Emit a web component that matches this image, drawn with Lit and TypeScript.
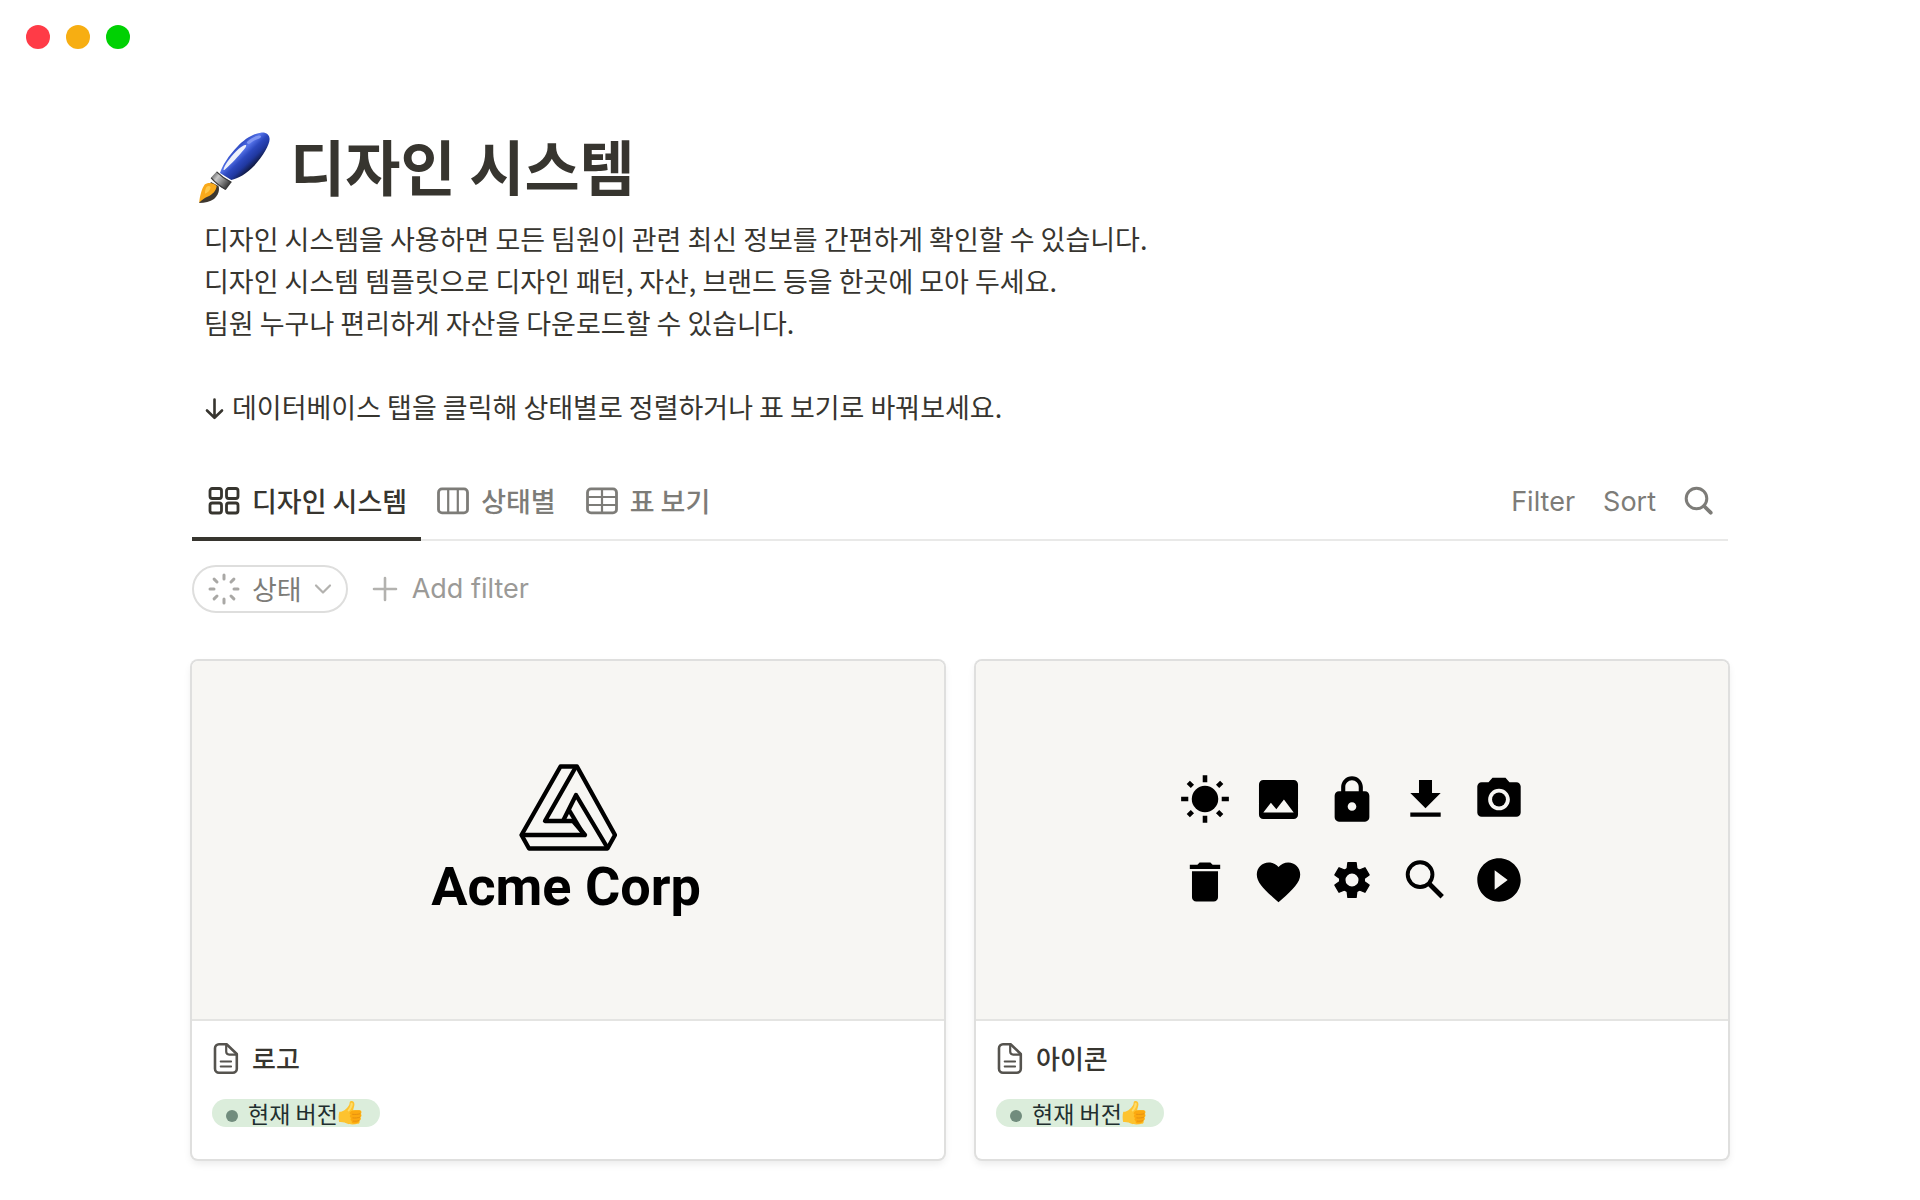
import { LitElement, html, svg, css, type TemplateResult, type SVGTemplateResult } from "lit";
import { customElement, property, state } from "lit/decorators.js";
import { classMap } from "lit/directives/class-map.js";

type ViewId = "gallery" | "board" | "table";

interface View {
  id: ViewId;
  label: string;
  icon: SVGTemplateResult;
}

const VIEWS: View[] = [
  {
    id: "gallery",
    label: "디자인 시스템",
    icon: svg`
      <rect x="2" y="4.500" width="11.500" height="10" rx="2.200"/>
      <rect x="18.500" y="4.500" width="11.500" height="10" rx="2.200"/>
      <rect x="2" y="19" width="11.500" height="10" rx="2.200"/>
      <rect x="18.500" y="19" width="11.500" height="10" rx="2.200"/>`,
  },
  {
    id: "board",
    label: "상태별",
    icon: svg`
      <rect x="1.500" y="4.900" width="29" height="24" rx="3.500"/>
      <path d="M11.200 5v24M20.800 5v24" stroke-width="2.200"/>`,
  },
  {
    id: "table",
    label: "표 보기",
    icon: svg`
      <rect x="1.500" y="4.900" width="29" height="24" rx="3.500"/>
      <path d="M2 13h28M2 21h28M16 5v24" stroke-width="2.200"/>`,
  },
];

/* Each glyph sits on a 24-unit grid; x and y give its centre on the cover. */
const COVER_ICONS: { x: number; y: number; glyph: SVGTemplateResult }[] = [
  {
    x: 229, y: 138,
    glyph: svg`
      <circle cx="12" cy="12" r="6.1"/>
      <path fill="none" stroke="currentColor" stroke-width="2.1"
        d="M12 1v3.3M12 19.700v3.300M1 12h3.300M19.700 12H23M4.300 4.300l1.900 1.900M17.800 17.800l1.900 1.900M4.300 19.700l1.900-1.900M17.800 6.200l1.900-1.900"/>`,
  },
  {
    x: 302.5, y: 138.5,
    glyph: svg`<path d="M21 19V5c0-1.100-.9-2-2-2H5c-1.100 0-2 .9-2 2v14c0 1.100.9 2 2 2h14c1.100 0 2-.9 2-2zM8.500 13.500l2.500 3.010L14.500 12l4.500 6H5l3.500-4.500z"/>`,
  },
  {
    x: 376, y: 139,
    glyph: svg`<path fill-rule="evenodd" d="M18 8h-1V6c0-2.760-2.240-5-5-5S7 3.240 7 6v2H6c-1.100 0-2 .9-2 2v10c0 1.100.9 2 2 2h12c1.100 0 2-.9 2-2V10c0-1.100-.9-2-2-2zm-6 9c-1.100 0-2-.9-2-2s.9-2 2-2 2 .9 2 2-.9 2-2 2zm3.100-9H8.900V6c0-1.710 1.390-3.100 3.100-3.100s3.100 1.390 3.100 3.100v2z"/>`,
  },
  { x: 449.5, y: 138.5, glyph: svg`<path d="M19 9h-4V3H9v6H5l7 7 7-7zM5 18v2h14v-2H5z"/>` },
  {
    x: 523, y: 138.5,
    glyph: svg`
      <circle cx="12" cy="12" r="3.200"/>
      <path fill-rule="evenodd" d="M9 2L7.170 4H4c-1.100 0-2 .9-2 2v12c0 1.100.9 2 2 2h16c1.100 0 2-.9 2-2V6c0-1.100-.9-2-2-2h-3.170L15 2H9zm3 15c-2.760 0-5-2.240-5-5s2.240-5 5-5 5 2.240 5 5-2.240 5-5 5z"/>`,
  },
  {
    x: 229, y: 221,
    glyph: svg`<path d="M6 19c0 1.100.9 2 2 2h8c1.100 0 2-.9 2-2V7H6v12zM19 4h-3.500l-1-1h-5l-1 1H5v2h14V4z"/>`,
  },
  {
    x: 302.5, y: 221,
    glyph: svg`<path d="M12 21.350l-1.450-1.320C5.400 15.360 2 12.280 2 8.500 2 5.420 4.420 3 7.500 3c1.740 0 3.410.81 4.500 2.090C13.090 3.810 14.760 3 16.500 3 19.580 3 22 5.420 22 8.500c0 3.780-3.400 6.860-8.550 11.540L12 21.350z"/>`,
  },
  {
    x: 376, y: 219,
    glyph: svg`
      <circle cx="12" cy="12" r="4.500" fill="none" stroke="currentColor" stroke-width="3"/>
      ${[0, 60, 120, 180, 240, 300].map(
        (turn) => svg`<path transform="rotate(${turn} 12 12)" d="M9.700 7.400L10.100 4h3.800l.4 3.400z" stroke="currentColor" stroke-width=".6" stroke-linejoin="round"/>`,
      )}`,
  },
  {
    x: 449.5, y: 219,
    glyph: svg`
      <circle cx="9.500" cy="9.500" r="5.700" fill="none" stroke="currentColor" stroke-width="1.800"/>
      <path d="M13.700 13.700l6 6" fill="none" stroke="currentColor" stroke-width="2.200"/>`,
  },
  {
    x: 523, y: 219,
    glyph: svg`<path fill-rule="evenodd" d="M12 2C6.480 2 2 6.480 2 12s4.480 10 10 10 10-4.480 10-10S17.520 2 12 2zm-2 14.500v-9l6 4.500-6 4.500z"/>`,
  },
];

const logoCover = html`
  <div class="logo">
    <svg class="logo-mark" viewBox="0 0 98 87" aria-hidden="true">
      <g fill="none" stroke="#000" stroke-width="4.300" stroke-linejoin="round">
        <path d="M41.500 2.500H58L96 71 88.500 84.500H10L2.500 71z"/>
        <path d="M56.500 3.500L26 57H54L66 71H2.500"/>
        <path d="M44 57L57 31 88 83"/>
        <path d="M50 46L65 71"/>
      </g>
    </svg>
    <span class="logo-name">Acme Corp</span>
  </div>
`;

const iconCover = html`
  <svg class="icon-sheet" viewBox="0 0 752 358" aria-hidden="true">
    ${COVER_ICONS.map(
      ({ x, y, glyph }) => svg`<g fill="currentColor" transform="translate(${x} ${y}) scale(2.170) translate(-12 -12)">${glyph}</g>`,
    )}
  </svg>
`;

@customElement("gallery-card")
export class GalleryCard extends LitElement {
  static styles = css`
    :host {
      display: block;
    }
    .card {
      display: block;
      border-radius: 6px;
      overflow: hidden;
      background: #fff;
      color: #37352f;
      text-decoration: none;
      box-shadow: 0 0 0 2px #dfdfde, 0 4px 8px rgba(15, 15, 15, 0.1);
    }
    .cover {
      box-sizing: border-box;
      display: flex;
      align-items: center;
      justify-content: center;
      aspect-ratio: 752 / 360;
      background: #f7f6f3;
      border-bottom: 2px solid #e4e4e2;
      color: #000;
    }
    .logo {
      display: flex;
      flex-direction: column;
      align-items: center;
      gap: 4px;
      padding-top: 2px;
    }
    .logo-mark {
      width: 98px;
      height: 87px;
    }
    .logo-name {
      padding-right: 4px;
      font: 700 54px/64px Roboto, sans-serif;
    }
    .icon-sheet {
      width: 100%;
      height: 100%;
    }
    .body {
      display: flex;
      flex-direction: column;
      align-items: flex-start;
      gap: 24px;
      padding: 20px 20px 32px;
    }
    .title {
      display: flex;
      align-items: center;
      gap: 12px;
      margin: 0;
      font-size: 26px;
      line-height: 34px;
      font-weight: 500;
    }
    .page-icon {
      width: 28px;
      height: 32px;
    }
    .tag {
      display: flex;
      align-items: center;
      height: 28px;
      padding: 0 18px 0 14px;
      border-radius: 14px;
      background: #dbeddb;
      color: #1f2f2f;
      font-size: 23px;
      line-height: 28px;
    }
    .dot {
      width: 12px;
      height: 12px;
      margin: 6px 10px 0 0;
      border-radius: 50%;
      background: #718c7d;
    }
    .thumb {
      width: 24px;
      height: 26px;
    }
  `;

  @property() name = "";
  @property() status = "";
  @property({ attribute: false }) cover?: TemplateResult;

  render() {
    return html`
      <a class="card" href="#">
        <div class="cover">${this.cover}</div>
        <div class="body">
          <h2 class="title">
            <svg class="page-icon" viewBox="0 0 28 32" fill="none" stroke="#55534e" stroke-linejoin="round" stroke-linecap="round" aria-hidden="true">
              <path stroke-width="2.600" d="M7 2.200h7.600L24.800 12v14.700a4 4 0 0 1-4 4H7a4 4 0 0 1-4-4V6.200a4 4 0 0 1 4-4z"/>
              <path stroke-width="2.200" d="M14.200 2.600V9.600a3 3 0 0 0 3 3h7.400"/>
              <path stroke-width="1.800" d="M8.600 19.500h10.600M8.600 24.500h10.600"/>
            </svg>
            ${this.name}
          </h2>
          <div class="tag">
            <span class="dot"></span>
            <span>${this.status}</span>
            <svg class="thumb" viewBox="0 0 24 26" role="img" aria-label="👍">
              <path fill="#fdc32f" d="M12.500 1.300c1.900-.9 3.800.3 3.900 2.600.1 2.300-.9 4.300-1.300 6.300h6.400c2.200 0 2.600 2.600 1.200 3.500 1.300 1 1 3-.3 3.500.9 1.100.5 2.900-.9 3.400.7 1.400-.1 2.900-1.800 3.200-3.900.9-8.600.8-11.500-.6-2-1-4.800-1.200-7-1.200C.4 19 .4 14.500 1.300 11.800c2.600-.1 4.700-1.100 6.600-2.900 2.200-2 3.500-3.600 3.700-5.600.1-.9.200-1.600.9-2z"/>
              <path fill="#fca90f" d="M13 11.200c-1.900 1.200-1.800 2.700-.2 3.400-1.500 1.200-1.200 2.800.3 3.300-1.200 1.200-.6 2.600.7 3-.6 1.300.2 2.200 1.600 2.600 2.100.4 5.600-.1 5.700-2.900 1.500-.5 1.700-2.300.9-3.400 1.300-.6 1.500-2.500.3-3.500 1.300-.9 1-3.300-1-3.400-2.500-.1-6.300-.3-8.300.9z"/>
              <path fill="none" stroke="#e08a10" stroke-width=".8" stroke-linecap="round" d="M14.500 14.300c2.600.3 5.400.2 7.600-.5M14.800 17.900c2.400.3 4.900.1 7-.7M15.200 21.100c2 .2 4 .1 5.800-.5"/>
              <path fill="#fedc6a" d="M12.700 3.200c.9-.7 2-.3 2.100.9.100 2-1.600 5.200-3.400 7-.8.700-2.300.1-1.500-1.100 1.500-1.900 2.600-4.200 2.800-6.800z"/>
            </svg>
          </div>
        </div>
      </a>
    `;
  }
}

@customElement("app-root")
export class AppRoot extends LitElement {
  static styles = css`
    :host {
      display: block;
      background: #fff;
      color: #37352f;
      font-family: "Noto Sans CJK KR", "Noto Sans", sans-serif;
    }
    button {
      display: flex;
      align-items: center;
      margin: 0;
      padding: 0;
      border: 0;
      background: none;
      color: inherit;
      font: inherit;
      cursor: pointer;
    }
    .window-bar {
      display: flex;
      gap: 16px;
      padding: 25px 26px;
    }
    .light {
      width: 24px;
      height: 24px;
      border-radius: 50%;
    }
    .close {
      background: #ff3b47;
    }
    .minimize {
      background: #f7ae12;
    }
    .zoom {
      background: #00d103;
    }
    .page {
      padding: 52px 10% 38px;
    }
    .heading {
      display: flex;
      align-items: center;
      gap: 20px;
      padding-left: 6px;
    }
    .brush {
      width: 72px;
      height: 74px;
    }
    h1 {
      margin: 0;
      padding-bottom: 6px;
      font-size: 60px;
      line-height: 78px;
      font-weight: 700;
    }
    .intro {
      margin: 8px 12px 33px;
      font-size: 27px;
      line-height: 42px;
    }
    .intro p {
      margin: 0;
    }
    .intro p + p {
      margin-top: 42px;
    }
    .arrow {
      display: inline-block;
      width: 20px;
      height: 24px;
      margin-right: 8px;
      vertical-align: -4px;
    }
    .toolbar {
      display: flex;
      justify-content: space-between;
      align-items: stretch;
      height: 78px;
      border-bottom: 2px solid #e9e9e8;
      font-size: 27px;
      color: #7d7c78;
    }
    .tabs,
    .actions {
      display: flex;
    }
    .tab {
      gap: 12px;
      padding: 2px 14px 0 16px;
      margin-bottom: -2px;
      border-bottom: 4px solid transparent;
      font-weight: 500;
    }
    .tab.active {
      color: #37352f;
      border-bottom-color: #37352f;
    }
    .tab-icon {
      width: 32px;
      height: 32px;
      fill: none;
      stroke: currentColor;
      stroke-width: 2.8px;
    }
    .actions {
      gap: 28px;
      padding: 2px 14px 0 0;
      font-family: Inter, sans-serif;
    }
    .search {
      width: 30px;
      height: 30px;
    }
    .filters {
      display: flex;
      align-items: center;
      gap: 24px;
      padding: 24px 0 48px;
      font-size: 27px;
      line-height: 44px;
    }
    .pill {
      gap: 12px;
      height: 48px;
      padding: 0 14px;
      border: 2px solid #dededd;
      border-radius: 24px;
      color: #7d7c78;
    }
    .spinner {
      width: 32px;
      height: 32px;
    }
    .chevron {
      width: 18px;
      height: 12px;
    }
    .add {
      gap: 14px;
      color: #9b9a97;
      font-family: Inter, sans-serif;
    }
    .plus {
      width: 26px;
      height: 26px;
    }
    .gallery {
      display: grid;
      grid-template-columns: repeat(2, minmax(0, 1fr));
      gap: 32px;
    }
  `;

  @state() private view: ViewId = "gallery";

  private renderTab(view: View) {
    const active = view.id === this.view;
    return html`
      <button
        class=${classMap({ tab: true, active })}
        role="tab"
        aria-selected=${active ? "true" : "false"}
        @click=${() => (this.view = view.id)}
      >
        <svg class="tab-icon" viewBox="0 0 32 32" aria-hidden="true">${view.icon}</svg>
        ${view.label}
      </button>
    `;
  }

  render() {
    return html`
      <div class="window-bar">
        <span class="light close"></span>
        <span class="light minimize"></span>
        <span class="light zoom"></span>
      </div>
      <main class="page">
        <header class="heading">
          <svg class="brush" viewBox="0 0 72 74" aria-hidden="true">
            <defs>
              <linearGradient id="handle" gradientUnits="userSpaceOnUse" x1="37" y1="18" x2="54" y2="36">
                <stop offset="0" stop-color="#2f4bc4"/>
                <stop offset=".25" stop-color="#5674ea"/>
                <stop offset=".5" stop-color="#2c48be"/>
                <stop offset=".75" stop-color="#2038a0"/>
                <stop offset="1" stop-color="#121c48"/>
              </linearGradient>
              <linearGradient id="ferrule" gradientUnits="userSpaceOnUse" x1="14" y1="43" x2="31" y2="56">
                <stop offset="0" stop-color="#5a5a5a"/>
                <stop offset=".3" stop-color="#c8c8c8"/>
                <stop offset=".6" stop-color="#858585"/>
                <stop offset="1" stop-color="#2a2a2a"/>
              </linearGradient>
            </defs>
            <path fill="url(#handle)" d="M22 42C24 35 31 24 39.300 15.700 46 8.500 55 2.500 62.700 1.700 68 1 71.500 3.500 71.600 8 71.600 14 65 25 56 35 48.500 43 40 47.500 33.300 49z"/>
            <path fill="#eef1fb" d="M25.500 38.500c1-5 9-15 15-20.500 3-2.500 6-4.500 7.500-4 1 1-1.500 4-5 8C38 28 31 35 27 38.500c-1 .8-1.600.8-1.500 0z"/>
            <path fill="#8096f2" d="M49 11c4-4 9-6.500 13-6.500 2 .6 1 2.500-2 3.500-3.500 1-6 3-8 4.500-2 1-3.500 0-3-1.500z"/>
            <path fill="url(#ferrule)" d="M18.700 40.500c4 4 9.500 8 15 10.500l-6 8c-6-3-11-7-15-12z"/>
            <path fill="none" stroke="#3b3b3b" stroke-width="1.200" d="M18.700 40.800c4 4 9.500 8 14.600 10.400M13.200 46.800c4 4.700 9 8.500 14.200 11.400"/>
            <path fill="#3d372f" d="M13 51l7.500 4c1.500 4-.5 9.500-4.500 13-4 2.800-9 4-15 4z"/>
            <path fill="#f9a91a" d="M6.700 53.600c2-2.300 9-2.600 12 1.400-.7 5-4.200 8.500-8.700 10.500-4 1.700-6 3.500-8.700 6 .4-6 2.500-14 5.400-17.900z"/>
            <path fill="#ffc84a" d="M8.500 56c1.500-1.600 4-1.200 4 .8-.5 3-3 5-5.500 6-.2-2.300.3-5 1.500-6.800z"/>
          </svg>
          <h1>디자인 시스템</h1>
        </header>
        <section class="intro">
          <p>
            디자인 시스템을 사용하면 모든 팀원이 관련 최신 정보를 간편하게 확인할 수 있습니다.<br />
            디자인 시스템 템플릿으로 디자인 패턴, 자산, 브랜드 등을 한곳에 모아 두세요.<br />
            팀원 누구나 편리하게 자산을 다운로드할 수 있습니다.
          </p>
          <p><svg class="arrow" viewBox="0 0 20 24" role="img" aria-label="↓"><path d="M10.500 1.500v18M3 12.500l7.500 7.300 7.500-7.300" fill="none" stroke="currentColor" stroke-width="2.600" stroke-linecap="round" stroke-linejoin="round"/></svg>데이터베이스 탭을 클릭해 상태별로 정렬하거나 표 보기로 바꿔보세요.</p>
        </section>
        <nav class="toolbar">
          <div class="tabs" role="tablist">${VIEWS.map((view) => this.renderTab(view))}</div>
          <div class="actions">
            <button>Filter</button>
            <button>Sort</button>
            <button aria-label="Search">
              <svg class="search" viewBox="0 0 30 30" fill="none" stroke="currentColor" aria-hidden="true">
                <circle cx="12.500" cy="12.500" r="10.300" stroke-width="3"/>
                <path d="M20 20l6.700 6.700" stroke-width="3.800" stroke-linecap="round"/>
              </svg>
            </button>
          </div>
        </nav>
        <div class="filters">
          <button class="pill">
            <svg class="spinner" viewBox="0 0 32 32" fill="none" stroke="#a9a8a5" stroke-width="3" stroke-linecap="round" aria-hidden="true">
              <path d="M16 2v4M16 26v4M2 16h4M26 16h4M6.100 6.100l2.900 2.900M23 23l2.900 2.900M6.100 25.900L9 23M23 9l2.900-2.900"/>
            </svg>
            상태
            <svg class="chevron" viewBox="0 0 18 12" fill="none" stroke="#b3b2af" stroke-width="2.200" stroke-linecap="round" stroke-linejoin="round" aria-hidden="true">
              <path d="M2 2.500l7 7 7-7"/>
            </svg>
          </button>
          <button class="add">
            <svg class="plus" viewBox="0 0 26 26" stroke="#b3b2af" stroke-width="2.600" stroke-linecap="round" aria-hidden="true">
              <path d="M13 2v22M2 13h22"/>
            </svg>
            Add filter
          </button>
        </div>
        <section class="gallery">
          <gallery-card name="로고" status="현재 버전" .cover=${logoCover}></gallery-card>
          <gallery-card name="아이콘" status="현재 버전" .cover=${iconCover}></gallery-card>
        </section>
      </main>
    `;
  }
}
